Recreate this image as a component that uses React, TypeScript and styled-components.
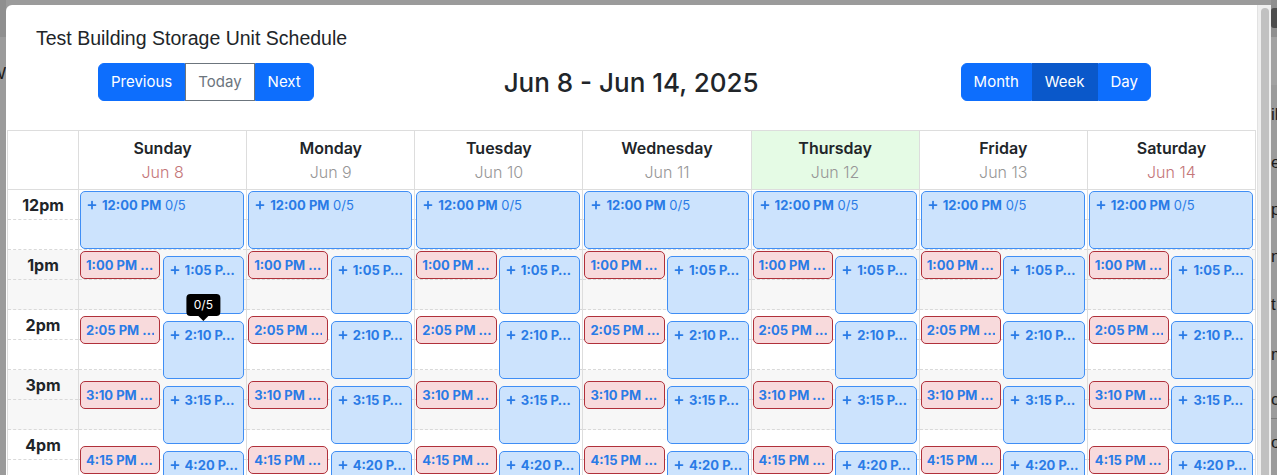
import React from "react";
import styled, { createGlobalStyle, css } from "styled-components";
import { Plus } from "lucide-react";

const GlobalStyle = createGlobalStyle`
  html, body {
    margin: 0;
    padding: 0;
    height: 475px;
    overflow: hidden;
    background: #9b9b9b;
  }
  body {
    font-family: Inter, "Liberation Sans", sans-serif;
    color: #212529;
  }
  * {
    box-sizing: border-box;
  }
`;

const Page = styled.div`
  display: flex;
  height: 475px;
`;

/* dimmed page behind the modal */
const Peek = styled.div<{ $align?: "start" | "end"; $grow?: boolean }>`
  display: flex;
  flex-direction: column;
  width: 6px;
  flex-shrink: 0;
  overflow: hidden;
  background: #9b9b9b;
  ${(p) =>
    p.$grow &&
    css`
      flex: 1;
    `}
  align-items: ${(p) => (p.$align === "end" ? "flex-end" : "flex-start")};
`;

const PeekNav = styled.div`
  height: 37px;
  width: 100%;
  flex-shrink: 0;
  background: #8f8f8f;
  padding-top: 8px;
`;

const PeekIcon = styled.div`
  width: 14px;
  height: 20px;
  border-radius: 3px;
  background: #4d4d4d;
`;

const PeekBand = styled.div`
  height: 48px;
  width: 100%;
  flex-shrink: 0;
  background: #a2a2a2;
`;

const PeekWord = styled.div<{ $top: number; $link?: boolean }>`
  margin-top: ${(p) => p.$top}px;
  font-family: "Liberation Sans", sans-serif;
  font-size: 17px;
  line-height: 20px;
  white-space: nowrap;
  color: ${(p) => (p.$link ? "#0a3b86" : "#1b1b1b")};
  text-decoration: ${(p) => (p.$link ? "underline" : "none")};
`;

const PeekRule = styled.div<{ $top: number }>`
  margin-top: ${(p) => p.$top}px;
  width: 100%;
  height: 1px;
  background: #7c7c7c;
`;

const Modal = styled.div`
  width: 1251px;
  flex-shrink: 0;
  margin-top: 5px;
  background: #fff;
  border-top-left-radius: 6px;
  overflow: hidden;
  display: flex;
  flex-direction: column;
`;

const ModalTitle = styled.h5`
  margin: 0;
  padding: 22px 30px 0;
  font-family: "Liberation Sans", sans-serif;
  font-weight: 400;
  font-size: 19.5px;
  line-height: 23px;
  color: #212529;
`;

const Toolbar = styled.div`
  display: flex;
  align-items: center;
  margin-top: 13px;
  padding: 0 106px 0 92px;
`;

const ButtonGroup = styled.div`
  display: inline-flex;
`;

const Button = styled.button<{ $variant?: "primary" | "active" | "outline" }>`
  height: 38px;
  padding: 0 12px;
  font-family: Inter, sans-serif;
  font-size: 15px;
  line-height: 24px;
  border: 1px solid #0d6efd;
  background: #0d6efd;
  color: #fff;
  border-radius: 0;
  cursor: pointer;
  &:first-child {
    border-radius: 6px 0 0 6px;
  }
  &:last-child {
    border-radius: 0 6px 6px 0;
  }
  ${(p) =>
    p.$variant === "active" &&
    css`
      background: #0a58ca;
      border-color: #0a58ca;
    `}
  ${(p) =>
    p.$variant === "outline" &&
    css`
      background: #fff;
      border-color: #6c757d;
      color: #6c757d;
    `}
`;

const RangeLabel = styled.div`
  flex: 1;
  text-align: center;
  padding-right: 12px;
  font-size: 26px;
  font-weight: 500;
  color: #212529;
`;

const Calendar = styled.div`
  margin: 29px 1px 0 1px;
  border-top: 1px solid #ddd;
  border-left: 1px solid #ddd;
  border-right: 1px solid #ddd;
`;

const Row = styled.div`
  display: grid;
  grid-template-columns: 70px repeat(7, 1fr);
`;

const HeaderRow = styled(Row)`
  border-bottom: 1px solid #ddd;
`;

const HeaderCell = styled.div<{ $today?: boolean }>`
  height: 58px;
  padding-top: 7px;
  text-align: center;
  border-left: 1px solid #ddd;
  background: ${(p) => (p.$today ? "#e5fbe5" : "#fff")};
  &:first-child {
    border-left: none;
  }
`;

const DayName = styled.div`
  font-size: 16px;
  font-weight: 600;
  line-height: 20px;
  color: #212529;
`;

const DayDate = styled.div<{ $weekend?: boolean }>`
  margin-top: 4px;
  font-size: 16px;
  font-weight: 300;
  line-height: 20px;
  color: ${(p) => (p.$weekend ? "#c47679" : "#979797")};
`;

const Column = styled.div`
  position: relative;
  border-left: 1px solid #ddd;
  &:first-child {
    border-left: none;
  }
`;

const HourBlock = styled.div<{ $shade: boolean }>`
  background: ${(p) => (p.$shade ? "#f7f7f7" : "#fff")};
`;

const Slot = styled.div`
  height: 30px;
  border-bottom: 1px dashed #d9d9d9;
  display: flex;
  align-items: center;
  justify-content: center;
`;

const HourLabel = styled.span`
  font-size: 16px;
  font-weight: 700;
  color: #212529;
`;

const Event = styled.div<{ $kind: "open" | "booked" }>`
  position: absolute;
  display: flex;
  align-items: flex-start;
  padding: 5px 5px;
  border-radius: 5px;
  font-size: 13px;
  line-height: 16px;
  font-weight: 700;
  color: #2a7be6;
  white-space: nowrap;
  ${(p) =>
    p.$kind === "open"
      ? css`
          background: #cce3fd;
          border: 1px solid #3f8ef5;
        `
      : css`
          background: #f8dadc;
          border: 1px solid #b0303a;
        `}
`;

const EventText = styled.span`
  overflow: hidden;
  min-width: 0;
`;

const Count = styled.span`
  font-weight: 400;
`;

const PlusIcon = styled(Plus)`
  flex-shrink: 0;
  margin: 2px 4px 0 0;
`;

const Tooltip = styled.div`
  position: absolute;
  bottom: calc(100% + 6px);
  left: 50%;
  transform: translateX(-50%);
  padding: 3px 7px;
  background: #000;
  color: #fff;
  font-size: 12px;
  font-weight: 400;
  line-height: 16px;
  border-radius: 4px;
  &::after {
    content: "";
    position: absolute;
    top: 100%;
    left: 50%;
    margin-left: -5px;
    border: 5px solid transparent;
    border-top-color: #000;
    border-bottom: none;
  }
`;

const Scrollbar = styled.div`
  width: 14px;
  flex-shrink: 0;
  margin-top: 5px;
  padding: 3px 2px 0 3px;
  background: #efefef;
  border-left: 1px solid #e2e2e2;
`;

const Thumb = styled.div`
  height: 100%;
  border-radius: 5px 5px 0 0;
  background: #c1c1c1;
`;

type Day = { name: string; date: string; weekend?: boolean; today?: boolean };

const days: Day[] = [
  { name: "Sunday", date: "Jun 8", weekend: true },
  { name: "Monday", date: "Jun 9" },
  { name: "Tuesday", date: "Jun 10" },
  { name: "Wednesday", date: "Jun 11" },
  { name: "Thursday", date: "Jun 12", today: true },
  { name: "Friday", date: "Jun 13" },
  { name: "Saturday", date: "Jun 14", weekend: true },
];

const hours = ["12pm", "1pm", "2pm", "3pm", "4pm", "5pm"];

type Slotted = {
  start: number; // minutes after 12pm
  length: number;
  kind: "open" | "booked";
  label: string;
  count?: string;
  side: "full" | "left" | "right";
  tip?: boolean;
};

const events: Slotted[] = [
  { start: 0, length: 60, kind: "open", label: "12:00 PM", count: "0/5", side: "full" },
  { start: 60, length: 30, kind: "booked", label: "1:00 PM …", side: "left" },
  { start: 65, length: 60, kind: "open", label: "1:05 P…", side: "right" },
  { start: 125, length: 30, kind: "booked", label: "2:05 PM …", side: "left" },
  { start: 130, length: 60, kind: "open", label: "2:10 P…", side: "right", tip: true },
  { start: 190, length: 30, kind: "booked", label: "3:10 PM …", side: "left" },
  { start: 195, length: 60, kind: "open", label: "3:15 P…", side: "right" },
  { start: 255, length: 30, kind: "booked", label: "4:15 PM …", side: "left" },
  { start: 260, length: 60, kind: "open", label: "4:20 P…", side: "right" },
];

function placement(e: Slotted): React.CSSProperties {
  const box: React.CSSProperties = { top: e.start + 1, height: e.length - 2 };
  if (e.side === "full") return { ...box, left: 1, right: 2 };
  if (e.side === "left") return { ...box, left: 1, width: "48%" };
  return { ...box, left: "50%", right: 2 };
}

function HourBlocks({ labels }: { labels: boolean }) {
  return (
    <>
      {hours.map((h, i) => (
        <HourBlock key={h} $shade={i % 2 === 1}>
          <Slot>{labels && <HourLabel>{h}</HourLabel>}</Slot>
          <Slot />
        </HourBlock>
      ))}
    </>
  );
}

function App() {
  return (
    <>
      <GlobalStyle />
      <Page>
        <Peek $align="end">
          <PeekNav />
          <PeekWord $top={27}>W</PeekWord>
        </Peek>
        <Modal>
          <ModalTitle>Test Building Storage Unit Schedule</ModalTitle>
          <Toolbar>
            <ButtonGroup>
              <Button>Previous</Button>
              <Button $variant="outline">Today</Button>
              <Button>Next</Button>
            </ButtonGroup>
            <RangeLabel>Jun 8 - Jun 14, 2025</RangeLabel>
            <ButtonGroup>
              <Button>Month</Button>
              <Button $variant="active">Week</Button>
              <Button>Day</Button>
            </ButtonGroup>
          </Toolbar>
          <Calendar>
            <HeaderRow>
              <HeaderCell />
              {days.map((d) => (
                <HeaderCell key={d.name} $today={d.today}>
                  <DayName>{d.name}</DayName>
                  <DayDate $weekend={d.weekend}>{d.date}</DayDate>
                </HeaderCell>
              ))}
            </HeaderRow>
            <Row>
              <Column>
                <HourBlocks labels />
              </Column>
              {days.map((d, di) => (
                <Column key={d.name}>
                  <HourBlocks labels={false} />
                  {events.map((e) => (
                    <Event key={e.start} $kind={e.kind} style={placement(e)}>
                      {e.kind === "open" && <PlusIcon size={12} strokeWidth={3.5} />}
                      <EventText>
                        {e.label}
                        {e.count && <Count> {e.count}</Count>}
                      </EventText>
                      {e.tip && di === 0 && <Tooltip>0/5</Tooltip>}
                    </Event>
                  ))}
                </Column>
              ))}
            </Row>
          </Calendar>
        </Modal>
        <Scrollbar>
          <Thumb />
        </Scrollbar>
        <Peek $grow>
          <PeekNav>
            <PeekIcon />
          </PeekNav>
          <PeekBand />
          <PeekWord $top={20}>il</PeekWord>
          <PeekWord $top={28}>e</PeekWord>
          <PeekWord $top={27}>p</PeekWord>
          <PeekWord $top={27}>n</PeekWord>
          <PeekWord $top={28}>t</PeekWord>
          <PeekWord $top={30}>m</PeekWord>
          <PeekWord $top={25}>c</PeekWord>
          <PeekRule $top={8} />
          <PeekWord $top={14}>or</PeekWord>
        </Peek>
      </Page>
    </>
  );
}

export default App;
